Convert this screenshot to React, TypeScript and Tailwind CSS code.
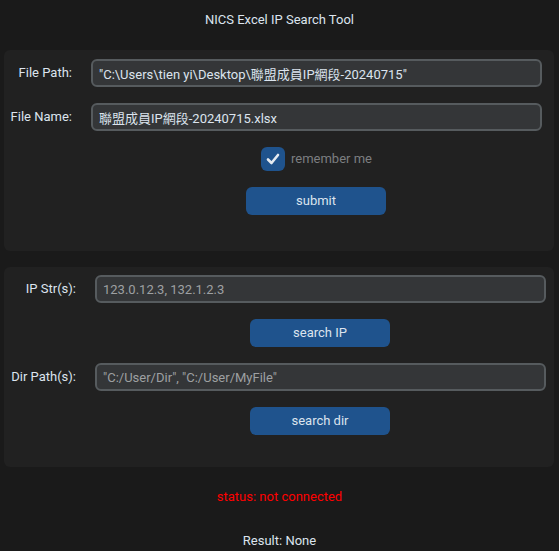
import { useState } from "react";

const font = { fontFamily: "Roboto, 'Noto Sans CJK TC', sans-serif" };

// Label + entry row used in both panels
const FieldRow = ({
  label,
  labelWidth,
  gap,
  value,
  placeholder,
}: {
  label: string;
  labelWidth: string;
  gap: string;
  value?: string;
  placeholder?: string;
}) => (
  <div className={`flex items-center ${gap}`}>
    <span className={`${labelWidth} shrink-0 text-right text-[13px] leading-[16px] text-[#dce4ee]`}>{label}</span>
    <input
      readOnly
      value={value ?? ""}
      placeholder={placeholder}
      style={font}
      className="h-[28px] w-[451px] rounded-[6px] border-2 border-[#565b5e] bg-[#343638] px-[6px] text-[13px] text-[#dce4ee] outline-none placeholder:text-[#9ea0a2]"
    />
  </div>
);

const BlueButton = ({ children, offset }: { children: string; offset: string }) => (
  <button
    className={`${offset} h-[28px] w-[140px] rounded-[6px] bg-[#1f538d] text-[13px] leading-[16px] text-[#dce4ee]`}
    style={font}
  >
    {children}
  </button>
);

const App = () => {
  const [remember, setRemember] = useState(true);

  return (
    <div className="h-[551px] w-[559px] overflow-hidden bg-[#1a1a1a] text-[#dce4ee]" style={font}>
      <div className="flex h-[50px] justify-center pt-[12px] text-[13px] leading-[16px]">NICS Excel IP Search Tool</div>

      {/* file panel */}
      <div className="ml-[4px] flex h-[201px] w-[550px] flex-col rounded-[6px] bg-[#212121] pt-[9px]">
        <FieldRow
          label="File Path:"
          labelWidth="w-[68px]"
          gap="gap-[19px]"
          value={'"C:\\Users\\tien yi\\Desktop\\聯盟成員IP網段-20240715"'}
        />
        <div className="mt-[16px]">
          <FieldRow label="File Name:" labelWidth="w-[68px]" gap="gap-[19px]" value="聯盟成員IP網段-20240715.xlsx" />
        </div>
        <label className="ml-[257px] mt-[16px] flex h-[24px] cursor-pointer items-center gap-[6px]">
          <span
            onClick={() => setRemember(!remember)}
            className="flex h-[24px] w-[24px] items-center justify-center rounded-[6px] bg-[#1f538d]"
          >
            {remember && (
              <svg width="14" height="14" viewBox="0 0 14 14">
                <path d="M2 7.5 L5.5 11 L12 3" fill="none" stroke="#e5eaf0" strokeWidth="2.6" strokeLinecap="round" strokeLinejoin="round" />
              </svg>
            )}
          </span>
          <span className="text-[13px] leading-[16px] text-[#7c7e80]">remember me</span>
        </label>
        <div className="mt-[16px] flex">
          <BlueButton offset="ml-[242px]">submit</BlueButton>
        </div>
      </div>

      {/* search panel */}
      <div className="ml-[4px] mt-[16px] flex h-[200px] w-[550px] flex-col rounded-[6px] bg-[#212121] pt-[8px]">
        <FieldRow label="IP Str(s):" labelWidth="w-[72px]" gap="gap-[19px]" placeholder="123.0.12.3, 132.1.2.3" />
        <div className="mt-[16px] flex">
          <BlueButton offset="ml-[246px]">search IP</BlueButton>
        </div>
        <div className="mt-[16px]">
          <FieldRow
            label="Dir Path(s):"
            labelWidth="w-[72px]"
            gap="gap-[19px]"
            placeholder={'"C:/User/Dir", "C:/User/MyFile"'}
          />
        </div>
        <div className="mt-[16px] flex">
          <BlueButton offset="ml-[246px]">search dir</BlueButton>
        </div>
      </div>

      <div className="mt-[22px] text-center text-[13px] leading-[16px] text-[#ff0000]">status: not connected</div>
      <div className="mt-[28px] text-center text-[13px] leading-[16px] text-[#dce4ee]">Result: None</div>
    </div>
  );
};

export default App;
